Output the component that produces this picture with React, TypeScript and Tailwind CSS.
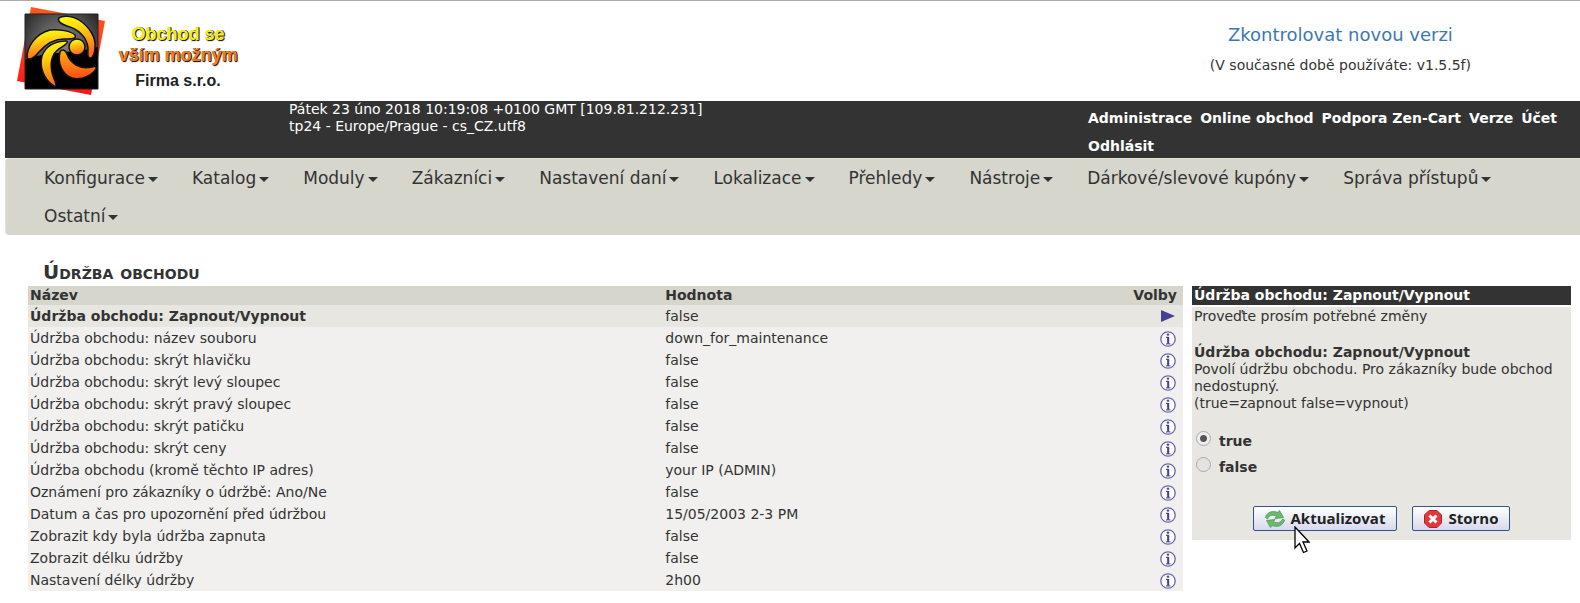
const navItems = [
    "Konfigurace", "Katalog", "Moduly", "Zákazníci", "Nastavení daní", "Lokalizace",
    "Přehledy", "Nástroje", "Dárkové/slevové kupóny", "Správa přístupů", "Ostatní",
];

const topLinks = ["Administrace", "Online obchod", "Podpora Zen-Cart", "Verze", "Účet", "Odhlásit"];

const rows = [
    ["Údržba obchodu: název souboru", "down_for_maintenance"],
    ["Údržba obchodu: skrýt hlavičku", "false"],
    ["Údržba obchodu: skrýt levý sloupec", "false"],
    ["Údržba obchodu: skrýt pravý sloupec", "false"],
    ["Údržba obchodu: skrýt patičku", "false"],
    ["Údržba obchodu: skrýt ceny", "false"],
    ["Údržba obchodu (kromě těchto IP adres)", "your IP (ADMIN)"],
    ["Oznámení pro zákazníky o údržbě: Ano/Ne", "false"],
    ["Datum a čas pro upozornění před údržbou", "15/05/2003 2-3 PM"],
    ["Zobrazit kdy byla údržba zapnuta", "false"],
    ["Zobrazit délku údržby", "false"],
    ["Nastavení délky údržby", "2h00"],
];

function Logo() {
    return (
        <svg className="h-[90px] w-[90px]" viewBox="0 0 90 90" aria-hidden="true">
            <defs>
                <linearGradient id="red" x1="0" y1="0" x2="0" y2="1">
                    <stop offset="0" stopColor="#ff5a1f" />
                    <stop offset="1" stopColor="#ff1414" />
                </linearGradient>
                <radialGradient id="dark" cx="0.5" cy="0.4" r="0.6">
                    <stop offset="0" stopColor="#8a8a8a" />
                    <stop offset="0.6" stopColor="#555" />
                    <stop offset="1" stopColor="#2c2c2c" />
                </radialGradient>
                <linearGradient id="flame" x1="0" y1="0" x2="0.2" y2="1">
                    <stop offset="0" stopColor="#ffff10" />
                    <stop offset="0.3" stopColor="#ffe010" />
                    <stop offset="1" stopColor="#ff6a18" />
                </linearGradient>
                <linearGradient id="ember" x1="0" y1="0" x2="0" y2="1">
                    <stop offset="0" stopColor="#ffb010" />
                    <stop offset="1" stopColor="#ff4a18" />
                </linearGradient>
            </defs>
            <path d="M14 0L88 14L74 88L0 74Z" fill="url(#red)" />
            <path d="M8 7H81V82H8Z" fill="url(#dark)" />
            <path d="M8 53C28 44 60 46 81 40V82H8Z" fill="#000" />
            <path d="M8 7H81V82H8Z" fill="none" stroke="#222" />
            <g fill="url(#flame)" stroke="#111" strokeWidth="1.5">
                <circle cx="60" cy="40" r="8" />
                <path d="M42 11C46 8 56 9 62 13C73 20 79 31 78 40C78 46 76 51 73 51C70 51 71 46 71 41C70 30 61 22 50 19C44 17 40 14 42 11Z" />
                <path d="M10 51C10 40 18 27 33 23C42 22 54 24 58 28C60 32 54 32 47 32C36 32 29 37 22 45C18 50 13 54 10 51Z" />
                <path d="M49 34C37 34 28 40 25 49C22 60 27 73 37 79C40 80 39 77 38 74C34 65 32 56 37 47C40 42 46 40 49 37C51 35 51 34 49 34Z" />
                <path d="M43 45C40 57 46 68 55 71C66 74 76 67 79 62C80 60 78 59 75 60C63 63 53 56 50 47C48 42 44 42 43 45Z" fill="url(#ember)" />
            </g>
        </svg>
    );
}

function InfoIcon() {
    return (
        <svg className="h-4 w-4" viewBox="0 0 16 16" fill="none">
            <circle cx="8" cy="8" r="7.2" fill="#fff" stroke="#6a65ae" strokeWidth="1.3" />
            <circle cx="8" cy="3.6" r="1.2" fill="#463f96" />
            <path d="M6 6.4H8.2V12.500" stroke="#5852a2" strokeWidth="1.200" />
            <path d="M8.200 6V13" stroke="#463f96" strokeWidth="2" />
            <path d="M6 12.900H10.500" stroke="#5852a2" strokeWidth="1.100" />
        </svg>
    );
}

function Caret() {
    return <span className="ml-[3px] inline-block border-x-5 border-t-5 border-x-transparent border-t-[#333] align-middle" />;
}

function Header() {
    return (
        <header className="ml-[5px]">
            <div className="flex h-[100px] justify-between">
                <div className="flex pt-1.5 pl-3">
                    <Logo />
                    <div className="ml-2 flex w-[126px] flex-col items-center pt-4 font-['Liberation_Sans',sans-serif] font-bold">
                        <span className="text-lg leading-[22px] text-[#f4ee10] [text-shadow:1px_0_0_#333,1px_1px_1px_#000]">Obchod se</span>
                        <span className="text-lg leading-5 text-[#f47a20] [text-shadow:1px_0_0_#333,1px_1px_1px_#000]">vším možným</span>
                        <span className="mt-1.5 text-base leading-5 text-[#222]">Firma s.r.o.</span>
                    </div>
                </div>
                <div className="mr-[109px] pt-[22px] text-center">
                    <a href="#verze" className="block text-lg leading-6 text-[#3a78b4]">Zkontrolovat novou verzi</a>
                    <p className="mt-2.5 leading-4">(V současné době používáte: v1.5.5f)</p>
                </div>
            </div>
            <div className="flex h-[57px] justify-between bg-[#333] text-white">
                <div className="ml-[284px] leading-[17px]">
                    <div>Pátek 23 úno 2018 10:19:08 +0100 GMT [109.81.212.231]</div>
                    <div>tp24 - Europe/Prague - cs_CZ.utf8</div>
                </div>
                <div className="flex w-[492px] flex-wrap content-start gap-x-2 pt-[3px] leading-7 font-bold">
                    {topLinks.map((link) => (
                        <a key={link} href={"#" + link}>{link}</a>
                    ))}
                </div>
            </div>
            <nav className="rounded-l border-t border-l border-[#e4e4dc] bg-[#d6d6cc]">
                <ul className="flex flex-wrap pl-[21px]">
                    {navItems.map((item) => (
                        <li key={item}>
                            <button type="button" className="block px-[17px] text-[17px] leading-[38px] whitespace-nowrap">
                                {item}
                                <Caret />
                            </button>
                        </li>
                    ))}
                </ul>
            </nav>
        </header>
    );
}

function SettingsTable() {
    return (
        <table className="grow border-collapse text-left">
            <thead className="bg-[#d6d6cc]">
                <tr className="h-[19px] leading-[19px]">
                    <th className="w-[55%] px-0.5 py-0">Název</th>
                    <th className="px-0.5 py-0">Hodnota</th>
                    <th className="px-1.5 py-0 text-right">Volby</th>
                </tr>
            </thead>
            <tbody className="bg-[#f1f0ee] leading-[22px]">
                <tr className="bg-[#e7e6e0]">
                    <td className="px-0.5 py-0 font-bold">Údržba obchodu: Zapnout/Vypnout</td>
                    <td className="px-0.5 py-0">false</td>
                    <td className="px-2 py-0">
                        <svg className="ml-auto h-3.5 w-3.5" viewBox="0 0 14 14">
                            <path d="M0 1L14 7L0 13Z" fill="#463f96" />
                        </svg>
                    </td>
                </tr>
                {rows.map(([name, value]) => (
                    <tr key={name} className="h-[22px]">
                        <td className="px-0.5 py-0">{name}</td>
                        <td className="px-0.5 py-0">{value}</td>
                        <td className="px-[7px] pt-0.5 pb-0">
                            <a href="#info" aria-label="Info" className="flex justify-end"><InfoIcon /></a>
                        </td>
                    </tr>
                ))}
            </tbody>
        </table>
    );
}

const buttonClass = "flex h-[25px] items-center gap-1.5 rounded-xs border border-[#2f5590] bg-linear-to-b from-white to-[#d8d8ee] px-[11px] font-['Open_Sans',sans-serif] text-[15px] font-bold text-[#222]";
const radioClass = "mt-0.5 ml-0.5 h-[15px] w-[15px] appearance-none rounded-full border border-[#aaa] bg-[#e4e3e1] checked:bg-[radial-gradient(circle,#555_0_3px,#eee_4px)]";

function EditPanel() {
    return (
        <aside className="w-[379px] shrink-0">
            <h2 className="bg-[#333] px-0.5 leading-[19px] font-bold text-white">Údržba obchodu: Zapnout/Vypnout</h2>
            <form className="mt-0.5 bg-[#e7e6e0] px-0.5 pt-px pb-[9px] leading-[17px]">
                <p>Proveďte prosím potřebné změny</p>
                <p className="mt-[19px] font-bold">Údržba obchodu: Zapnout/Vypnout</p>
                <p>Povolí údržbu obchodu. Pro zákazníky bude obchod nedostupný.</p>
                <p>(true=zapnout false=vypnout)</p>
                <div className="mt-[17px] font-bold">
                    <label className="flex h-[26px] gap-2">
                        <input type="radio" name="maintenance" defaultChecked className={radioClass} />
                        <span className="mt-1">true</span>
                    </label>
                    <label className="flex h-[26px] gap-2">
                        <input type="radio" name="maintenance" className={radioClass} />
                        <span className="mt-1">false</span>
                    </label>
                </div>
                <div className="relative mt-[25px] flex justify-center gap-[15px]">
                    <button type="button" className={buttonClass}>
                        <svg className="h-5 w-5" viewBox="0 0 20 20" fill="#6abb6a" stroke="#4a9850" strokeWidth="0.8" strokeLinejoin="round">
                            <path d="M0.500 8.500C2 2.500 8 1.500 13 3.500L14.500 1.500L18.500 8.500L10 9.500L11.500 7C8 5.500 4 6 2.500 10Z" />
                            <path d="M19.500 11C18 17 12 18.500 7 16.500L5.500 18.500L1.500 11.500L10 10.500L8.500 13C12 14.500 16 14 17.500 10Z" />
                        </svg>
                        Aktualizovat
                    </button>
                    <button type="button" className={buttonClass}>
                        <svg className="h-[18px] w-[18px]" viewBox="0 0 18 18">
                            <path d="M5 0.500H13L17.500 5V13L13 17.500H5L0.500 13V5Z" fill="#de3a3a" stroke="#b82020" />
                            <path d="M5.500 5.500L12.500 12.500M12.500 5.500L5.500 12.500" stroke="#fff" strokeWidth="3" />
                        </svg>
                        Storno
                    </button>
                    <svg className="pointer-events-none absolute top-5 left-[100px] h-7 w-4" viewBox="0 0 16 28">
                        <path d="M1 1V22L5.500 17.500L9.500 26.500L13 25L9 16H15Z" fill="#fff" stroke="#000" strokeWidth="1.300" />
                    </svg>
                </div>
            </form>
        </aside>
    );
}

export default function App() {
    return (
        <div className="border-t border-[#aaa] bg-white font-['DejaVu_Sans',sans-serif] text-sm text-[#333]">
            <Header />
            <main className="mt-6 mr-[9px] ml-7">
                <h1 className="pl-[15px] text-xl leading-[27px] font-bold [font-variant:small-caps]">Údržba obchodu</h1>
                <div className="flex items-start gap-[9px]">
                    <SettingsTable />
                    <EditPanel />
                </div>
            </main>
        </div>
    );
}
